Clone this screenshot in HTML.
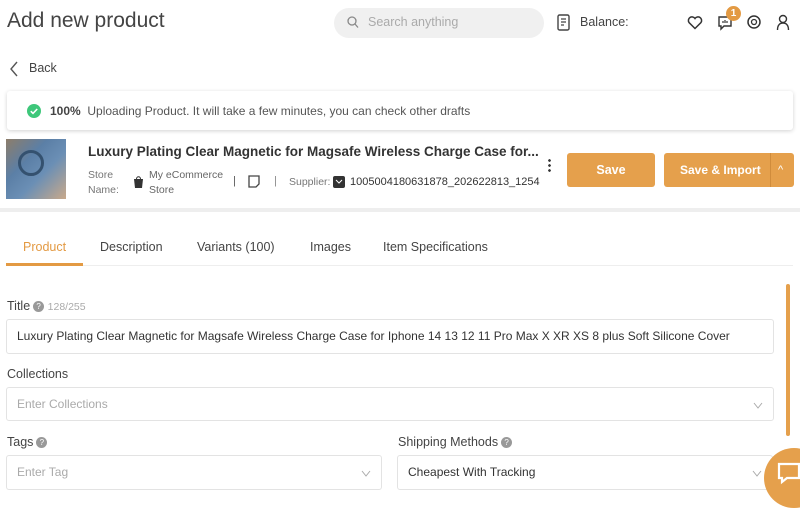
<!DOCTYPE html>
<html><head><meta charset="utf-8"><style>
*{box-sizing:border-box;margin:0;padding:0}
body{width:800px;height:497px;overflow:hidden;background:#fff;font-family:"Liberation Sans",sans-serif;color:#333;position:relative}
.a{position:absolute;white-space:nowrap}
.inp{position:absolute;border:1px solid #e3e3e3;border-radius:3px;height:35px;font-size:12px;padding-left:10px;line-height:33px;white-space:nowrap;overflow:hidden}
.ph{color:#aaa}
.chev{position:absolute;right:10px;top:12px;width:10px;height:10px}
.lbl{position:absolute;font-size:12.5px;color:#444}
.q{display:inline-block;width:11px;height:11px;border-radius:50%;background:#999;color:#fff;font-size:8px;line-height:11px;text-align:center;vertical-align:1px;margin-left:3px}
</style></head><body>
<div class="a" style="left:7px;top:9px;font-size:21px;color:#444">Add new product</div>
<div class="a" style="left:334px;top:8px;width:210px;height:30px;border-radius:15px;background:#f0f0f0"></div>
<svg class="a" style="left:347px;top:16px" width="12" height="13"><circle cx="5" cy="5" r="4" fill="none" stroke="#888" stroke-width="1.3"/><path d="M8 8l3 3.5" stroke="#888" stroke-width="1.3"/></svg>
<div class="a" style="left:368px;top:15px;font-size:12.5px;color:#aaa">Search anything</div>
<svg class="a" style="left:556px;top:14px" width="16" height="18"><rect x="2" y="1" width="11" height="15" rx="1.5" fill="none" stroke="#444" stroke-width="1.4"/><path d="M5 5h5M5 8h5M5 11h3" stroke="#444" stroke-width="1.2"/></svg>
<div class="a" style="left:580px;top:15px;font-size:12.5px;color:#444">Balance:</div>
<svg class="a" style="left:687px;top:15px" width="16" height="15"><path d="M8 13.5L2 7.5A3.3 3.3 0 0 1 8 3.5A3.3 3.3 0 0 1 14 7.5Z" fill="none" stroke="#333" stroke-width="1.5"/></svg>
<svg class="a" style="left:717px;top:15px" width="16" height="16"><path d="M2 2h12v9H7l-3 3v-3H2z" fill="none" stroke="#333" stroke-width="1.4"/><path d="M6 6v2M8 5v3M10 6v2" stroke="#333" stroke-width="1.2"/></svg>
<div class="a" style="left:726px;top:6px;width:15px;height:15px;border-radius:50%;background:#e39a43;color:#fff;font-size:10px;font-weight:bold;text-align:center;line-height:15px">1</div>
<svg class="a" style="left:746px;top:14px" width="16" height="16"><circle cx="8" cy="8" r="6" fill="none" stroke="#333" stroke-width="1.5"/><circle cx="8" cy="8" r="2.5" fill="none" stroke="#333" stroke-width="1.3"/></svg>
<svg class="a" style="left:776px;top:14px" width="14" height="17"><circle cx="7" cy="5" r="3.5" fill="none" stroke="#333" stroke-width="1.4"/><path d="M1.5 16c0-5 2.5-7 5.5-7s5.5 2 5.5 7" fill="none" stroke="#333" stroke-width="1.4"/></svg>

<svg class="a" style="left:9px;top:61px" width="10" height="16"><path d="M8 1L2 8l6 7" fill="none" stroke="#555" stroke-width="1.4"/></svg>
<div class="a" style="left:29px;top:61px;font-size:12.5px;color:#444">Back</div>

<div class="a" style="left:7px;top:91px;width:786px;height:39px;border-radius:3px;box-shadow:0 1px 4px rgba(0,0,0,.18);background:#fff"></div>
<svg class="a" style="left:27px;top:104px" width="14" height="14"><circle cx="7" cy="7" r="7" fill="#3ec77a"/><path d="M3.8 7.2l2.2 2.2 4.2-4.4" fill="none" stroke="#fff" stroke-width="1.6"/></svg>
<div class="a" style="left:50px;top:104px;font-size:12px;color:#555"><b style="color:#444">100%</b>&nbsp; Uploading Product. It will take a few minutes, you can check other drafts</div>

<div class="a" style="left:6px;top:139px;width:60px;height:60px;background:linear-gradient(135deg,#8d7d6a 0%,#5b7fa6 35%,#6b8fb5 60%,#c9a98a 100%)"></div>
<div class="a" style="left:18px;top:150px;width:26px;height:26px;border-radius:50%;border:3px solid #34516f"></div>
<div class="a" style="left:88px;top:144px;font-size:13.5px;font-weight:bold;color:#333">Luxury Plating Clear Magnetic for Magsafe Wireless Charge Case for...</div>
<div class="a" style="left:88px;top:168px;font-size:10.5px;color:#777;line-height:15px">Store<br>Name:</div>
<svg class="a" style="left:133px;top:175px" width="11" height="14"><path d="M1 4h9l-1 9H2z" fill="#333"/><path d="M3.5 4c0-3 4-3 4 0" fill="none" stroke="#333"/></svg>
<div class="a" style="left:149px;top:168px;font-size:10.5px;color:#666;line-height:15px">My eCommerce<br>Store</div>
<div class="a" style="left:233px;top:175px;font-size:11px;color:#555">|</div>
<svg class="a" style="left:248px;top:175px" width="12" height="13"><path d="M1 1h10v8l-3 3H1z" fill="none" stroke="#444" stroke-width="1.3"/></svg>
<div class="a" style="left:274px;top:175px;font-size:11px;color:#888">|</div>
<div class="a" style="left:289px;top:176px;font-size:10.5px;color:#777">Supplier:</div>
<svg class="a" style="left:333px;top:176px" width="12" height="12"><rect width="12" height="12" rx="2" fill="#333"/><path d="M3 4l3 3 3-3" stroke="#fff" fill="none"/></svg>
<div class="a" style="left:350px;top:176px;font-size:11px;color:#333">1005004180631878_202622813_1254</div>
<div class="a" style="left:548px;top:158px;width:3px;height:14px;background:radial-gradient(circle,#333 1.2px,transparent 1.5px) 0 0/3px 5px"></div>
<div class="a" style="left:567px;top:153px;width:88px;height:34px;border-radius:3px;background:#e5a04c;color:#fff;font-size:12.5px;font-weight:bold;text-align:center;line-height:34px">Save</div>
<div class="a" style="left:664px;top:153px;width:130px;height:34px;border-radius:3px;background:#e5a04c;color:#fff;font-size:12px;font-weight:bold;line-height:34px"><span style="position:absolute;left:16px">Save &amp; Import</span><span style="position:absolute;left:106px;top:0;width:1px;height:34px;background:#d08c3c"></span><span style="position:absolute;left:114px;font-weight:normal;font-size:11px">^</span></div>

<div class="a" style="left:0;top:208px;width:800px;height:4px;background:#eee"></div>

<div class="a" style="left:23px;top:240px;font-size:12.5px;color:#e39a43">Product</div>
<div class="a" style="left:100px;top:240px;font-size:12.5px;color:#444">Description</div>
<div class="a" style="left:197px;top:240px;font-size:12.5px;color:#444">Variants (100)</div>
<div class="a" style="left:310px;top:240px;font-size:12.5px;color:#444">Images</div>
<div class="a" style="left:383px;top:240px;font-size:12.5px;color:#444">Item Specifications</div>
<div class="a" style="left:6px;top:265px;width:787px;height:1px;background:#eee"></div>
<div class="a" style="left:6px;top:263px;width:77px;height:3px;background:#e39a43"></div>

<div class="a" style="left:786px;top:284px;width:4px;height:152px;border-radius:2px;background:#e5a04c"></div>

<div class="lbl" style="left:7px;top:299px">Title<span class="q">?</span> <span style="color:#aaa;font-size:10.5px">128/255</span></div>
<div class="inp" style="left:6px;top:319px;width:768px;color:#333">Luxury Plating Clear Magnetic for Magsafe Wireless Charge Case for Iphone 14 13 12 11 Pro Max X XR XS 8 plus Soft Silicone Cover</div>
<div class="lbl" style="left:7px;top:367px">Collections</div>
<div class="inp ph" style="left:6px;top:387px;width:768px;height:34px">Enter Collections<svg class="chev" viewBox="0 0 10 10"><path d="M1 3l4 5 4-5" fill="none" stroke="#aaa"/></svg></div>
<div class="lbl" style="left:7px;top:435px">Tags<span class="q">?</span></div>
<div class="inp ph" style="left:6px;top:455px;width:376px;height:35px">Enter Tag<svg class="chev" viewBox="0 0 10 10"><path d="M1 3l4 5 4-5" fill="none" stroke="#aaa"/></svg></div>
<div class="lbl" style="left:398px;top:435px">Shipping Methods<span class="q">?</span></div>
<div class="inp" style="left:397px;top:455px;width:376px;height:35px;color:#333">Cheapest With Tracking<svg class="chev" viewBox="0 0 10 10"><path d="M1 3l4 5 4-5" fill="none" stroke="#aaa"/></svg></div>
<div class="a" style="left:764px;top:448px;width:60px;height:60px;border-radius:50%;background:#e5a04c"></div>
<svg class="a" style="left:777px;top:461px" width="24" height="24"><path d="M2 3h20v14H10l-5 4v-4H2z" fill="none" stroke="#fff" stroke-width="2.2"/></svg>
</body></html>
